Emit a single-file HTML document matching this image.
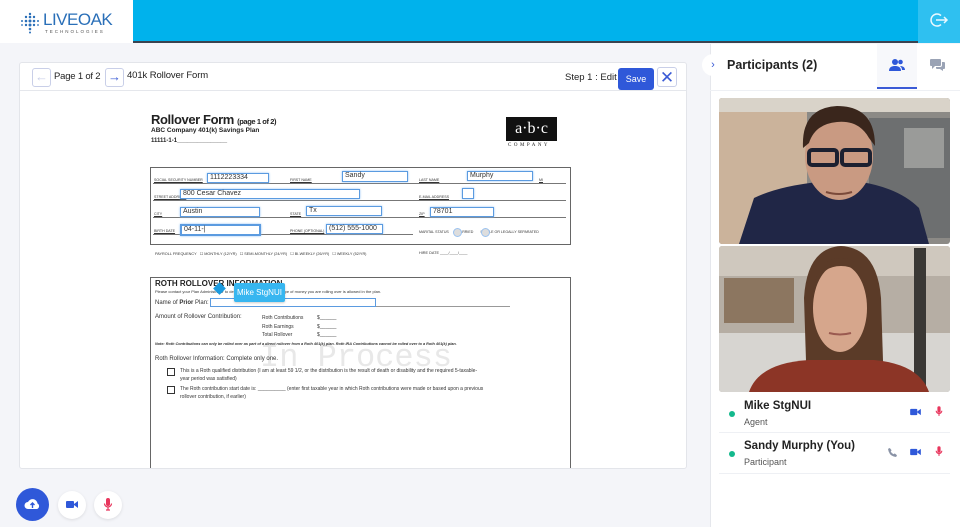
<!DOCTYPE html>
<html><head><meta charset="utf-8"><style>
*{box-sizing:border-box;margin:0;padding:0}
body{width:960px;height:527px;overflow:hidden;background:#f4f5f9;font-family:"Liberation Sans",sans-serif;position:relative;color:#222}
.a{position:absolute}
.hdr{left:0;top:0;width:960px;height:43px;background:#00b2ec;border-bottom:2px solid #3a4350}
.logo{left:0;top:0;width:133px;height:43px;background:#fff}
.card{left:19px;top:62px;width:668px;height:407px;background:#fff;border:1px solid #e3e5ea;border-radius:3px;overflow:hidden}
.tb{left:0;top:0;width:668px;height:28px;border-bottom:1px solid #e5e7ec}
.nb{width:19px;height:19px;border:1px solid #c9cfe8;border-radius:3px;color:#3b5bd6;font-size:13px;text-align:center;line-height:16px}
.f{border:1.5px solid #5b9be0;box-shadow:0 0 2px #8ec0f5;font-size:7px;color:#333;padding-left:2px;line-height:8px;background:#fff}
.lbl{font-size:3.6px;color:#333;text-decoration:underline}
.ln{height:1px;background:#777}
.sm{font-size:5px;color:#333}
.rp{left:710px;top:44px;width:250px;height:483px;background:#fff}
.ic{width:28px;height:28px;border-radius:50%;background:#fff;box-shadow:0 1px 3px rgba(0,0,0,.1)}
</style></head><body>
<div class="a hdr"></div>
<div class="a logo">
<svg class="a" style="left:19px;top:12px" width="22" height="22" viewBox="0 0 22 22"><g fill="#2a6fb8">
<circle cx="11" cy="2" r="1.2"/><circle cx="7" cy="5" r="1.2"/><circle cx="11" cy="5" r="1.3"/><circle cx="15" cy="5" r="1.2"/><circle cx="3" cy="9" r="1"/><circle cx="7" cy="9" r="1.3"/><circle cx="11" cy="9" r="1.5"/><circle cx="15" cy="9" r="1.3"/><circle cx="19" cy="9" r="1"/><circle cx="7" cy="13" r="1.2"/><circle cx="11" cy="13" r="1.5"/><circle cx="15" cy="13" r="1.2"/><circle cx="11" cy="17" r="1.3"/><circle cx="11" cy="20.5" r="1"/><circle cx="3" cy="13" r="0.9"/><circle cx="19" cy="13" r="0.9"/></g></svg>
<div class="a" style="left:43px;top:11px;font-size:17px;color:#2a6fb8;letter-spacing:-0.5px;line-height:18px">LIVEOAK</div>
<div class="a" style="left:45px;top:29px;font-size:4.5px;color:#555;letter-spacing:2px">TECHNOLOGIES</div>
</div>
<div class="a" style="left:918px;top:0;width:42px;height:43px;background:#2fc0f0"></div>
<svg class="a" style="left:929px;top:11px" width="20" height="18" viewBox="0 0 20 18" fill="none" stroke="#e8f8ff" stroke-width="1.5"><path d="M12 4.5A6 6 0 1 0 12 13.5"/><path d="M7 9h11M15 6l3 3-3 3"/></svg>

<div class="a card">
<div class="a tb">
<div class="a nb" style="left:12px;top:5px;color:#c9cfe8">←</div>
<div class="a" style="left:34px;top:8px;font-size:9.5px;letter-spacing:-0.2px">Page 1 of 2</div>
<div class="a nb" style="left:85px;top:5px">→</div>
<div class="a" style="left:107px;top:7px;font-size:9.5px;letter-spacing:-0.1px">401k Rollover Form</div>
<div class="a" style="left:545px;top:9px;font-size:9.5px">Step 1 : Edit</div>
<div class="a" style="left:598px;top:5px;width:36px;height:22px;background:#2f58d9;color:#fff;border-radius:3px;font-size:9px;text-align:center;line-height:22px">Save</div>
<div class="a" style="left:637px;top:4px;width:20px;height:20px;border:1px solid #c9cfe8;border-radius:3px;color:#3b5bd6;font-size:17px;text-align:center;line-height:19px">✕</div>
</div>
<div class="a" style="left:131px;top:49px;font-size:13px;font-weight:bold;letter-spacing:-0.4px">Rollover Form <span style="font-size:7.5px">(page 1 of 2)</span></div>
<div class="a" style="left:131px;top:64px;font-size:6.5px;font-weight:bold">ABC Company 401(k) Savings Plan</div>
<div class="a" style="left:131px;top:75px;font-size:6px;font-weight:bold">11111-1-1_______________</div>
<div class="a" style="left:486px;top:54px;width:51px;height:24px;background:#111;color:#fff;font-family:'Liberation Serif',serif;font-size:16px;text-align:center;line-height:24px">a·b·c</div>
<div class="a" style="left:488px;top:80px;font-size:5px;letter-spacing:2.5px;font-family:'Liberation Serif',serif">COMPANY</div>

<div class="a" style="left:130px;top:104px;width:421px;height:78px;border:1px solid #666"></div>
<div class="a ln" style="left:133px;top:120px;width:413px"></div>
<div class="a ln" style="left:133px;top:137px;width:413px"></div>
<div class="a ln" style="left:133px;top:154px;width:413px"></div>
<div class="a ln" style="left:133px;top:171px;width:260px"></div>
<div class="a lbl" style="left:134px;top:115px">SOCIAL SECURITY NUMBER</div>
<div class="a lbl" style="left:270px;top:115px">FIRST NAME</div>
<div class="a lbl" style="left:399px;top:115px">LAST NAME</div>
<div class="a lbl" style="left:519px;top:115px">MI</div>
<div class="a lbl" style="left:134px;top:132px">STREET ADDRESS</div>
<div class="a lbl" style="left:399px;top:132px">E-MAIL ADDRESS</div>
<div class="a lbl" style="left:134px;top:149px">CITY</div>
<div class="a lbl" style="left:270px;top:149px">STATE</div>
<div class="a lbl" style="left:399px;top:149px">ZIP</div>
<div class="a lbl" style="left:134px;top:166px">BIRTH DATE</div>
<div class="a lbl" style="left:270px;top:166px">PHONE (OPTIONAL)</div>
<div class="a lbl" style="left:399px;top:167px;text-decoration:none">MARITAL STATUS &nbsp; &nbsp; &nbsp; &nbsp;MARRIED &nbsp; &nbsp; &nbsp; SINGLE OR LEGALLY SEPARATED</div>
<div class="a" style="left:433px;top:165px;width:9px;height:9px;border-radius:50%;background:#ddd;border:1px solid #9bc2ef"></div>
<div class="a" style="left:461px;top:165px;width:9px;height:9px;border-radius:50%;background:#ddd;border:1px solid #9bc2ef"></div>
<div class="a f" style="left:187px;top:110px;width:62px;height:10px">1112223334</div>
<div class="a f" style="left:322px;top:108px;width:66px;height:11px">Sandy</div>
<div class="a f" style="left:447px;top:108px;width:66px;height:10px">Murphy</div>
<div class="a f" style="left:160px;top:126px;width:180px;height:10px">800 Cesar Chavez</div>
<div class="a f" style="left:442px;top:125px;width:12px;height:11px"></div>
<div class="a f" style="left:160px;top:144px;width:80px;height:10px">Austin</div>
<div class="a f" style="left:286px;top:143px;width:76px;height:10px">Tx</div>
<div class="a f" style="left:410px;top:144px;width:64px;height:10px">78701</div>
<div class="a f" style="left:160px;top:161px;width:81px;height:12px;border-width:2px">04-11-|</div>
<div class="a f" style="left:306px;top:161px;width:57px;height:10px">(512) 555-1000</div>
<div class="a sm" style="left:135px;top:188px;font-size:3.8px">PAYROLL FREQUENCY &nbsp; ☐ MONTHLY (12/YR) &nbsp; ☐ SEMI-MONTHLY (24/YR) &nbsp; ☐ BI-WEEKLY (26/YR) &nbsp; ☐ WEEKLY (52/YR)</div>
<div class="a sm" style="left:399px;top:188px;font-size:3.8px">HIRE DATE ____/____/____</div>

<div class="a" style="left:130px;top:214px;width:421px;height:200px;border:1px solid #666;border-bottom:none"></div>
<div class="a sm" style="left:135px;top:226px;font-size:4px">Please contact your Plan Administrator to determine whether or not the type of money you are rolling over is allowed in the plan.</div>
<div class="a sm" style="left:135px;top:237px;font-size:6px">Name of <b>Prior</b> Plan:</div>
<div class="a" style="left:190px;top:235px;width:166px;height:9px;border:1.5px solid #5b9be0"></div>
<div class="a ln" style="left:356px;top:243px;width:134px;background:#999"></div>
<div class="a sm" style="left:135px;top:251px;font-size:6px">Amount of Rollover Contribution:</div>
<div class="a sm" style="left:242px;top:251px;font-size:5px;line-height:8.5px">Roth Contributions<br>Roth Earnings<br>Total Rollover</div>
<div class="a sm" style="left:297px;top:251px;font-size:5px;line-height:8.5px">$______<br>$______<br>$______</div>
<div class="a" style="left:240px;top:276px;font-family:'Liberation Mono',monospace;font-size:32px;color:#e8e8e8">In Process</div>
<div class="a sm" style="left:135px;top:279px;font-size:3.8px;font-style:italic;font-weight:bold">Note: Roth Contributions can only be rolled over as part of a direct rollover from a Roth 401(k) plan. Roth IRA Contributions cannot be rolled over to a Roth 401(k) plan.</div>
<div class="a sm" style="left:135px;top:293px;font-size:6px">Roth Rollover Information: Complete only one.</div>
<div class="a" style="left:147px;top:305px;width:8px;height:8px;border:1px solid #333"></div>
<div class="a sm" style="left:160px;top:304px;font-size:5px;line-height:8px">This is a Roth qualified distribution (I am at least 59 1/2, or the distribution is the result of death or disability and the required 5-taxable-<br>year period was satisfied)</div>
<div class="a" style="left:147px;top:323px;width:8px;height:8px;border:1px solid #333"></div>
<div class="a sm" style="left:160px;top:322px;font-size:5px;line-height:8px">The Roth contribution start date is: __________ (enter first taxable year in which Roth contributions were made or based upon a previous<br>rollover contribution, if earlier)</div>
<div class="a" style="left:135px;top:216px;font-size:8px;font-weight:bold">ROTH ROLLOVER INFORMATION</div>
<div class="a" style="left:195px;top:221px;width:9px;height:9px;background:#1a9be0;transform:rotate(45deg)"></div>
<div class="a" style="left:214px;top:220px;width:51px;height:19px;background:#37b6f0;border-radius:2px;color:#fff;font-size:8px;text-align:center;line-height:19px;box-shadow:0 1px 2px rgba(0,0,0,.2)">Mike StgNUI</div>
</div>

<div class="a" style="left:16px;top:488px;width:33px;height:33px;border-radius:50%;background:#2f58d9"></div>
<svg class="a" style="left:24px;top:497px" width="17" height="14" viewBox="0 0 17 14"><path d="M4 12a3.5 3.5 0 0 1 0-7 5 5 0 0 1 9.5 1.5A3 3 0 0 1 13 12z" fill="#fff"/><path d="M8.5 11V6M6.5 8l2-2 2 2" stroke="#2f58d9" stroke-width="1.4" fill="none"/></svg>
<div class="a ic" style="left:58px;top:491px"></div>
<svg class="a" style="left:66px;top:500px" width="12" height="9" viewBox="0 0 12 9"><rect x="0" y="1" width="8" height="7" rx="1" fill="#2f58d9"/><path d="M8 4l4-3v7l-4-3z" fill="#2f58d9"/></svg>
<div class="a ic" style="left:94px;top:491px"></div>
<svg class="a" style="left:103px;top:498px" width="10" height="13" viewBox="0 0 10 13"><rect x="3" y="0" width="4" height="8" rx="2" fill="#e8365d"/><path d="M1.5 5.5a3.5 3.5 0 0 0 7 0M5 9v3M3 12h4" stroke="#e8365d" fill="none" stroke-width="1.2"/></svg>

<div class="a rp">
<div class="a" style="left:0;top:0;width:1px;height:483px;background:#e5e7ec"></div>
<div class="a" style="left:-8px;top:10px;width:22px;height:22px;border-radius:50%;background:#fff;color:#3b5bd6;font-size:11px;text-align:center;line-height:22px">›</div>
<div class="a" style="left:17px;top:14px;font-size:12.5px;font-weight:bold;color:#222">Participants (2)</div>
<div class="a" style="left:167px;top:0;width:40px;height:45px;background:#f7f8fb;border-bottom:2px solid #3b5bd6"></div>
<svg class="a" style="left:179px;top:14px" width="16" height="14" viewBox="0 0 16 14" fill="#2f58d9"><circle cx="6" cy="4" r="3"/><path d="M0 13c0-4 3-5 6-5s6 1 6 5z"/><circle cx="11.5" cy="4" r="2.3"/><path d="M11 8c2.5 0 5 1 5 4h-3c0-2-1-3-2-4z"/></svg>
<svg class="a" style="left:220px;top:14px" width="15" height="14" viewBox="0 0 15 14" fill="#9aa3b5"><path d="M1 1h9a1 1 0 0 1 1 1v5a1 1 0 0 1-1 1H5l-3 3V8H1a1 1 0 0 1-1-1V2a1 1 0 0 1 1-1z"/><path d="M12 4h2a1 1 0 0 1 1 1v5a1 1 0 0 1-1 1h-1v2l-3-2H7a1 1 0 0 1-1-1V9h4a2 2 0 0 0 2-2z"/></svg>
<div class="a" style="left:0;top:46px;width:250px;height:1px;background:#eef0f4"></div>

<svg class="a" style="left:9px;top:54px" width="231" height="294" viewBox="0 0 231 294">
<defs><clipPath id="c1"><rect width="231" height="146" rx="3"/></clipPath><clipPath id="c2"><rect y="148" width="231" height="146" rx="3"/></clipPath></defs>
<g clip-path="url(#c1)">
<rect width="231" height="146" fill="#8c8a86"/>
<rect width="88" height="146" fill="#cbb39b"/>
<rect x="0" y="0" width="231" height="14" fill="#d9d3c9"/>
<rect x="150" y="20" width="81" height="120" fill="#6d6f70"/>
<rect x="185" y="30" width="40" height="40" fill="#9a9b99"/>
<path d="M20 146L35 100Q60 88 100 84L142 84Q180 90 200 110L210 146z" fill="#202646"/>
<rect x="103" y="70" width="36" height="24" fill="#b88873"/>
<ellipse cx="120" cy="58" rx="34" ry="44" fill="#c99a82"/>
<path d="M84 50Q82 10 118 8Q156 8 156 48L150 40Q140 22 118 24Q96 26 90 45z" fill="#3a261c"/>
<rect x="90" y="52" width="28" height="15" rx="3" fill="none" stroke="#1c2030" stroke-width="4"/>
<rect x="123" y="52" width="28" height="15" rx="3" fill="none" stroke="#1c2030" stroke-width="4"/>
<path d="M107 94Q120 98 133 94" stroke="#7a4a3a" stroke-width="2" fill="none"/>
</g>
<g clip-path="url(#c2)">
<rect y="148" width="231" height="146" fill="#b6aea4"/>
<rect y="148" width="231" height="30" fill="#cfc8be"/>
<rect y="235" width="231" height="60" fill="#d7d5d1"/>
<rect x="5" y="180" width="70" height="45" fill="#8c7660"/>
<rect x="195" y="150" width="12" height="144" fill="#3a3835"/>
<path d="M88 294L85 200Q88 150 122 148Q158 150 162 200L165 294z" fill="#5b3b28"/>
<path d="M30 294Q40 265 90 262L155 262Q200 266 210 294z" fill="#8c3526"/>
<ellipse cx="121" cy="210" rx="27" ry="44" fill="#d6a68c"/>
<path d="M94 200Q96 160 122 160Q148 160 150 200L146 185Q140 168 122 168Q104 168 98 185z" fill="#5b3b28"/>
<path d="M110 235Q121 238 132 235" stroke="#9a5a50" stroke-width="2" fill="none"/>
</g>
</svg>

<div class="a" style="left:19px;top:367px;width:6px;height:6px;border-radius:50%;background:#13b98d"></div>
<div class="a" style="left:34px;top:356px;font-size:11.5px;font-weight:bold;color:#222">Mike StgNUI</div>
<div class="a" style="left:34px;top:373px;font-size:9px;color:#555">Agent</div>
<svg class="a" style="left:200px;top:364px" width="11" height="8" viewBox="0 0 12 9"><rect x="0" y="1" width="8" height="7" rx="1" fill="#2f58d9"/><path d="M8 4l4-3v7l-4-3z" fill="#2f58d9"/></svg>
<svg class="a" style="left:225px;top:362px" width="8" height="11" viewBox="0 0 10 13"><rect x="3" y="0" width="4" height="8" rx="2" fill="#e8365d"/><path d="M1.5 5.5a3.5 3.5 0 0 0 7 0M5 9v3" stroke="#e8365d" fill="none" stroke-width="1.4"/></svg>
<div class="a" style="left:9px;top:388px;width:231px;height:1px;background:#eef0f4"></div>
<div class="a" style="left:19px;top:407px;width:6px;height:6px;border-radius:50%;background:#13b98d"></div>
<div class="a" style="left:34px;top:396px;font-size:11.5px;font-weight:bold;color:#222">Sandy Murphy (You)</div>
<div class="a" style="left:34px;top:413px;font-size:9px;color:#555">Participant</div>
<svg class="a" style="left:178px;top:404px" width="9" height="9" viewBox="0 0 10 10"><path d="M2 0l2 2.5-1 1.2q1 2.3 3.3 3.3l1.2-1L10 8l-1 2Q1 9 0 1z" fill="#8a93a6"/></svg>
<svg class="a" style="left:200px;top:404px" width="11" height="8" viewBox="0 0 12 9"><rect x="0" y="1" width="8" height="7" rx="1" fill="#2f58d9"/><path d="M8 4l4-3v7l-4-3z" fill="#2f58d9"/></svg>
<svg class="a" style="left:225px;top:402px" width="8" height="11" viewBox="0 0 10 13"><rect x="3" y="0" width="4" height="8" rx="2" fill="#e8365d"/><path d="M1.5 5.5a3.5 3.5 0 0 0 7 0M5 9v3" stroke="#e8365d" fill="none" stroke-width="1.4"/></svg>
<div class="a" style="left:9px;top:429px;width:231px;height:1px;background:#eef0f4"></div>
</div>
</body></html>
